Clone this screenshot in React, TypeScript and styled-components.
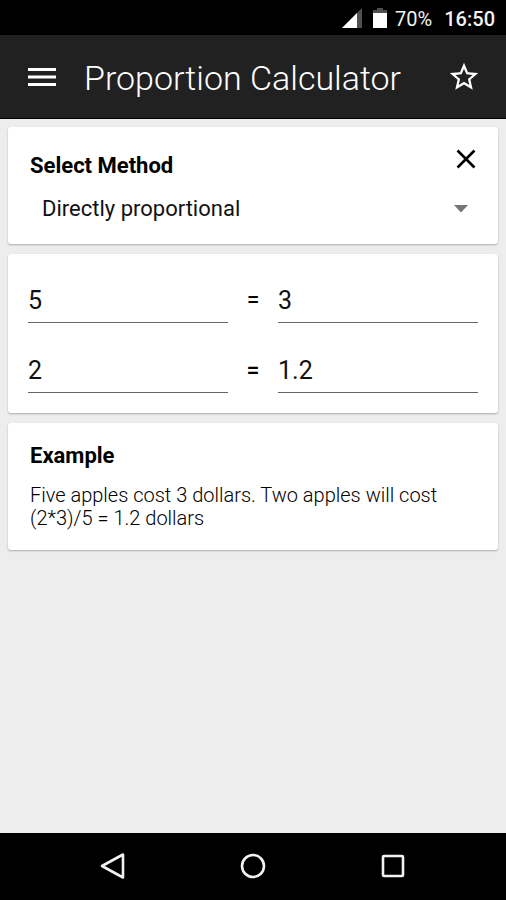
import React, { useState } from 'react';
import styled, { createGlobalStyle } from 'styled-components';

const GlobalStyle = createGlobalStyle`
  *, *::before, *::after { box-sizing: border-box; }
  body { margin: 0; background: #ededed; font-family: Roboto, "Liberation Sans", sans-serif; color: #000; }
  button, input, select { font: inherit; color: inherit; }
`;

const Screen = styled.div`
  min-height: 100vh;
  display: flex;
  flex-direction: column;
`;

const StatusBar = styled.div`
  display: flex;
  align-items: center;
  justify-content: flex-end;
  height: 35px;
  padding: 2px 11px 0 0;
  background: #000;
  color: #f2f2f2;
  font-size: 20px;
  line-height: 24px;
`;

const StatusIcon = styled.svg`
  display: block;
  margin: 0 8px 2px 3px;
`;

const Battery = styled.span`
  margin-right: 12px;
`;

const Clock = styled.time`
  font-weight: 500;
`;

const AppBar = styled.header`
  display: flex;
  align-items: center;
  height: 84px;
  padding: 0 24px;
  background: #212121;
  border-bottom: 1px solid #000;
  color: #fff;
`;

const AppTitle = styled.h1`
  flex: 1;
  margin: 0 0 0 24px;
  padding-top: 2px;
  font-size: 34px;
  line-height: 40px;
  font-weight: 300;
  white-space: nowrap;
`;

const IconButton = styled.button`
  display: flex;
  align-items: center;
  justify-content: center;
  width: 36px;
  height: 36px;
  padding: 0;
  border: 0;
  background: none;
  cursor: pointer;
`;

const Content = styled.main`
  flex: 1;
  display: flex;
  flex-direction: column;
  gap: 10px;
  padding: 8px;
`;

const Card = styled.section`
  padding: 22px;
  background: #fff;
  border-radius: 3px;
  box-shadow: 0 1px 2px rgba(0, 0, 0, 0.28);
`;

const MethodCard = styled(Card)`
  padding: 14px 14px 14px 22px;
`;

const CardHeader = styled.div`
  display: flex;
  justify-content: space-between;
`;

const CardTitle = styled.h2`
  margin: 0;
  font-size: 22px;
  line-height: 26px;
  font-weight: 700;
`;

const MethodTitle = styled(CardTitle)`
  padding-top: 12px;
`;

const SelectWrap = styled.div`
  display: flex;
  align-items: center;
  margin: 12px 0 3px;
`;

const Select = styled.select`
  flex: 1;
  min-width: 0;
  height: 36px;
  padding: 0 44px 0 12px;
  margin-right: -30px;
  border: 0;
  background: transparent;
  font-size: 22px;
  line-height: 28px;
  appearance: none;
  color: #111;
`;

const Caret = styled.svg`
  flex: none;
  margin-right: 16px;
  pointer-events: none;
`;

const RatioCard = styled(Card)`
  display: grid;
  gap: 24px;
  padding: 23px 20px 20px;
`;

const RatioRow = styled.div`
  display: grid;
  grid-template-columns: 1fr 50px 1fr;
  align-items: center;
`;

const Equals = styled.span<{ $strong?: boolean }>`
  padding-top: 2px;
  text-align: center;
  font-size: 23px;
  line-height: 28px;
  font-weight: ${(p) => (p.$strong ? 500 : 400)};
`;

const NumberField = styled.input`
  width: 100%;
  min-width: 0;
  height: 46px;
  padding: 2px 0 0;
  border: 0;
  border-bottom: 1px solid #666;
  border-radius: 0;
  outline: 0;
  background: transparent;
  font-size: 25px;
  color: #111;
`;

const ExampleCard = styled(Card)`
  padding: 20px 22px;
`;

const ExampleText = styled.p`
  margin: 15px 0 0;
  font-size: 20px;
  line-height: 23px;
  font-weight: 300;
`;

const NavBar = styled.nav`
  display: flex;
  align-items: center;
  justify-content: center;
  gap: 104px;
  height: 67px;
  padding-bottom: 1px;
  background: #000;
  color: #f2f2f2;
`;

export default function App() {
  const [method, setMethod] = useState('direct');
  const [values, setValues] = useState(['5', '3', '2', '1.2']);
  const [starred, setStarred] = useState(false);

  const field = (index: number, label: string) => (
    <NumberField
      aria-label={label}
      inputMode="decimal"
      value={values[index]}
      onChange={(e) => setValues(values.map((v, i) => (i === index ? e.target.value : v)))}
    />
  );

  return (
    <>
      <GlobalStyle />
      <Screen>
        <StatusBar>
          <StatusIcon width="20" height="20" viewBox="0 0 20 20" aria-hidden="true">
            <path d="M0 20L20 0v20z" fill="#505050" />
            <path d="M0 20L15 5v15z" fill="#fff" />
          </StatusIcon>
          <StatusIcon width="14" height="20" viewBox="0 0 14 20" aria-hidden="true">
            <path d="M4 0h6v2h4v4H0V2h4z" fill="#505050" />
            <path d="M0 5h14v15H0z" fill="#fff" />
          </StatusIcon>
          <Battery>70%</Battery>
          <Clock>16:50</Clock>
        </StatusBar>

        <AppBar>
          <IconButton type="button" aria-label="Open menu">
            <svg width="28" height="20" viewBox="0 0 28 20" fill="currentColor" aria-hidden="true">
              <path d="M0 1h28v3H0zM0 8.5h28v3H0zM0 16h28v3H0z" />
            </svg>
          </IconButton>
          <AppTitle>Proportion Calculator</AppTitle>
          <IconButton
            type="button"
            aria-label="Favorite"
            aria-pressed={starred}
            onClick={() => setStarred(!starred)}
          >
            <svg width="34" height="34" viewBox="0 0 24 24" fill="currentColor" aria-hidden="true">
              <path
                d={
                  starred
                    ? 'M12 17.27L18.18 21l-1.64-7.03L22 9.24l-7.19-.61L12 2 9.19 8.63 2 9.24l5.46 4.73L5.82 21z'
                    : 'M22 9.24l-7.19-.62L12 2 9.19 8.63 2 9.24l5.46 4.73L5.82 21 12 17.27 18.18 21l-1.63-7.03L22 9.24zM12 15.4l-3.76 2.27 1-4.28-3.32-2.88 4.38-.38L12 6.1l1.71 4.04 4.38.38-3.32 2.88 1 4.28L12 15.4z'
                }
              />
            </svg>
          </IconButton>
        </AppBar>

        <Content>
          <MethodCard>
            <CardHeader>
              <MethodTitle as="label" htmlFor="method">
                Select Method
              </MethodTitle>
              <IconButton type="button" aria-label="Close">
                <svg width="22" height="22" viewBox="0 0 22 22" aria-hidden="true">
                  <path d="M2.5 2.5l17 17M19.5 2.5l-17 17" stroke="#000" strokeWidth="2.6" />
                </svg>
              </IconButton>
            </CardHeader>
            <SelectWrap>
              <Select id="method" value={method} onChange={(e) => setMethod(e.target.value)}>
                <option value="direct">Directly proportional</option>
                <option value="inverse">Inversely proportional</option>
              </Select>
              <Caret width="14" height="8" viewBox="0 0 14 8" aria-hidden="true">
                <path d="M0 0h14L7 7.5z" fill="#757575" />
              </Caret>
            </SelectWrap>
          </MethodCard>

          <RatioCard>
            <RatioRow>
              {field(0, 'First quantity')}
              <Equals>=</Equals>
              {field(1, 'First value')}
            </RatioRow>
            <RatioRow>
              {field(2, 'Second quantity')}
              <Equals $strong>=</Equals>
              {field(3, 'Second value')}
            </RatioRow>
          </RatioCard>

          <ExampleCard>
            <CardTitle>Example</CardTitle>
            <ExampleText>
              Five apples cost 3 dollars. Two apples will cost (2*3)/5 = 1.2 dollars
            </ExampleText>
          </ExampleCard>
        </Content>

        <NavBar>
          <IconButton type="button" aria-label="Back">
            <svg width="28" height="28" viewBox="0 0 28 28" aria-hidden="true">
              <path d="M24 2.5v23L3 14z" fill="none" stroke="#f2f2f2" strokeWidth="2.6" strokeLinejoin="round" />
            </svg>
          </IconButton>
          <IconButton type="button" aria-label="Home">
            <svg width="28" height="28" viewBox="0 0 28 28" aria-hidden="true">
              <circle cx="14" cy="14" r="11" fill="none" stroke="#f2f2f2" strokeWidth="2.6" />
            </svg>
          </IconButton>
          <IconButton type="button" aria-label="Recent apps">
            <svg width="28" height="28" viewBox="0 0 28 28" aria-hidden="true">
              <rect x="4" y="4" width="20" height="20" rx="1" fill="none" stroke="#f2f2f2" strokeWidth="2.6" />
            </svg>
          </IconButton>
        </NavBar>
      </Screen>
    </>
  );
}
